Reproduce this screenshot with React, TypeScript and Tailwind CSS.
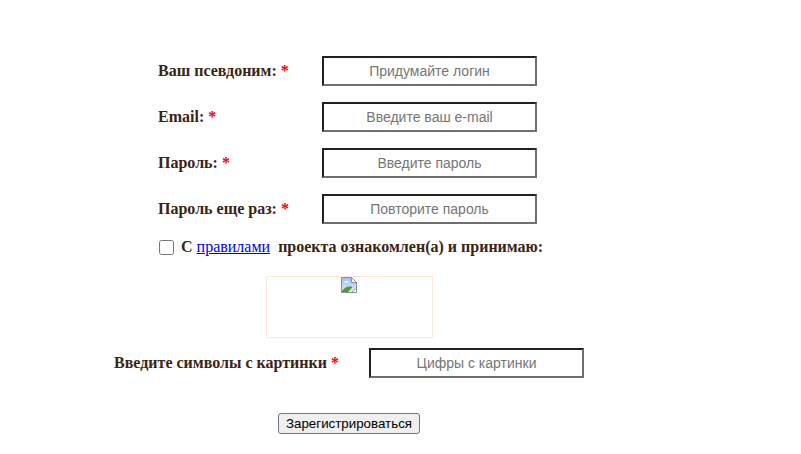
import React from 'react';

const labelClass = "font-bold text-[16px] leading-[18px] text-[#3b2413]";
const inputClass = "w-[215px] h-[30px] border-2 border-t-[#212121] border-l-[#212121] border-b-[#6f6f6f] border-r-[#6f6f6f] bg-white text-center text-[14px] font-['Liberation_Sans',Arial,sans-serif] placeholder:text-[#757575] outline-none";

const Star = () => <span className="text-[#ff0000]">*</span>;

const BrokenImage = () => (
  <svg width="16" height="16" viewBox="0 0 16 16" className="block">
    <defs>
      <linearGradient id="sky" x1="0" y1="0" x2="0" y2="1">
        <stop offset="0" stopColor="#9cc0ee" />
        <stop offset="1" stopColor="#dfe9f7" />
      </linearGradient>
    </defs>
    <path d="M0.5 0.5H10.5L15.5 5.5V15.5H0.5Z" fill="url(#sky)" stroke="#8f8f8f" />
    <path d="M10.5 0.5V5.5H15.5Z" fill="#fff" stroke="#8f8f8f" />
    <path d="M3 5.5C3.5 3.6 7 3.4 8 5.5Z" fill="#fff" />
    <path d="M1 15V14C3.5 10.5 7 8.5 11.5 10L7 15Z" fill="#4e9a2e" />
    <path d="M10 15L15 10.5V15Z" fill="#fff" />
    <path d="M11 15L15 11.5" stroke="#8f8f8f" />
  </svg>
);

const rows = [
  { label: 'Ваш псевдоним:', placeholder: 'Придумайте логин', type: 'text' },
  { label: 'Email:', placeholder: 'Введите ваш e-mail', type: 'email' },
  { label: 'Пароль:', placeholder: 'Введите пароль', type: 'password' },
  { label: 'Пароль еще раз:', placeholder: 'Повторите пароль', type: 'password' },
];

export default function App() {
  return (
    <div className="w-[801px] h-[454px] bg-white overflow-hidden font-['Liberation_Serif','Times_New_Roman',serif]">
      <form className="pt-[56px] pl-[158px]">
        <div className="flex flex-col gap-4">
          {rows.map(row => (
            <div key={row.label} className="flex items-center">
              <label className={`w-[164px] -mt-[1px] ${labelClass}`}>{row.label} <Star /></label>
              <input type={row.type} placeholder={row.placeholder} className={inputClass} />
            </div>
          ))}
        </div>

        <div className="flex items-center mt-[14px] h-[18px] mb-[20px]">
          <input type="checkbox" className="w-[15px] h-[15px] m-0 ml-[1px]" />
          <span className={`ml-[7px] whitespace-pre ${labelClass}`}>
            С <a href="#" className="font-normal text-[#0000ee] underline">правилами</a>  проекта ознакомлен(а) и принимаю:
          </span>
        </div>

        <div className="ml-[108px] w-[167px] h-[62px] border border-[#ffe8d6] flex justify-center pr-[1px]">
          <BrokenImage />
        </div>

        <div className="flex items-center mt-[10px] -ml-[44px]">
          <label className={`w-[255px] -mt-[1px] ${labelClass}`}>Введите символы с картинки <Star /></label>
          <input type="text" placeholder="Цифры с картинки" className={inputClass} />
        </div>

        <button type="button" className="block mt-[35px] ml-[120px] w-[142px] h-[21px] border border-[#767676] rounded-[3px] bg-[#efefef] text-[13.33px] leading-none text-black font-['Liberation_Sans',Arial,sans-serif]">
          Зарегистрироваться
        </button>
      </form>
    </div>
  );
}
